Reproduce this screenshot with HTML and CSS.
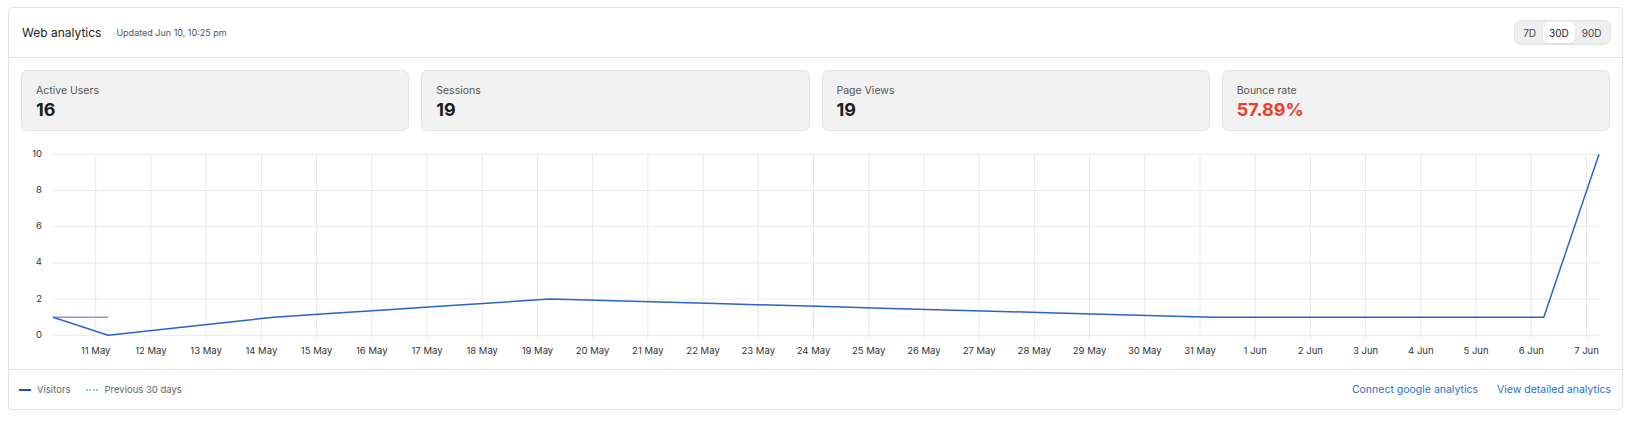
FILE: index.html
```html
<!DOCTYPE html>
<html lang="en">
<head>
  <meta charset="UTF-8" />
  <title>Web analytics</title>
  <link rel="stylesheet" href="styles.css">
</head>
<body>
  <div class="panel">
    <div class="panel-head">
      <div class="title-wrap">
        <h2 class="title">Web analytics</h2>
        <span class="updated">Updated Jun 10, 10:25 pm</span>
      </div>
      <div class="range">
        <button class="range-btn">7D</button>
        <button class="range-btn active">30D</button>
        <button class="range-btn">90D</button>
      </div>
    </div>

    <div class="stats">
      <div class="stat">
        <div class="stat-label">Active Users</div>
        <div class="stat-value">16</div>
      </div>
      <div class="stat">
        <div class="stat-label">Sessions</div>
        <div class="stat-value">19</div>
      </div>
      <div class="stat">
        <div class="stat-label">Page Views</div>
        <div class="stat-value">19</div>
      </div>
      <div class="stat">
        <div class="stat-label">Bounce rate</div>
        <div class="stat-value bad">57.89%</div>
      </div>
    </div>

    <svg id="chart" class="chart" width="1613" height="238" viewBox="0 0 1613 238"></svg>

    <div class="panel-foot">
      <div class="legend">
        <span class="legend-item"><i class="swatch solid"></i>Visitors</span>
        <span class="legend-item"><i class="swatch dotted"></i>Previous 30 days</span>
      </div>
      <div class="links">
        <a href="#">Connect google analytics</a>
        <a href="#">View detailed analytics</a>
      </div>
    </div>
  </div>

  <script>
    const svg = document.getElementById("chart");
    const NS = "http://www.w3.org/2000/svg";

    const left = 44, right = 1590;
    const zeroY = 204.3, unit = 18.1;
    const step = (right - left) / 28;
    const tickStart = 86.7;

    const days = [];
    for (let d = 11; d <= 31; d++) days.push(d + " May");
    for (let d = 1; d <= 7; d++) days.push(d + " Jun");

    // visitors, gaps already filled in
    const visitors = [1, 0, 1/3, 2/3, 1, 1.2, 1.4, 1.6, 1.8, 2];
    for (let j = 1; j <= 12; j++) visitors.push(2 - j / 12);
    for (let j = 0; j < 6; j++) visitors.push(1);
    visitors.push(10);

    const previous = [1, 1];

    function el(name, attrs, text) {
      const n = document.createElementNS(NS, name);
      for (const k in attrs) n.setAttribute(k, attrs[k]);
      if (text != null) n.textContent = text;
      svg.appendChild(n);
      return n;
    }

    const yOf = v => zeroY - v * unit;

    for (let v = 0; v <= 10; v += 2) {
      el("line", { x1: left, x2: right, y1: yOf(v), y2: yOf(v), class: "grid" });
      el("text", { x: 33, y: yOf(v), class: "y-label" }, v);
    }

    days.forEach((label, k) => {
      const x = tickStart + step * k;
      el("line", { x1: x, x2: x, y1: yOf(10), y2: zeroY + 4, class: "grid" });
      el("text", { x: x, y: 220, class: "x-label" }, label);
    });

    const pts = arr => arr.map((v, i) => (left + step * i).toFixed(1) + "," + yOf(v).toFixed(1)).join(" ");
    el("polyline", { points: pts(previous), class: "line-prev" });
    el("polyline", { points: pts(visitors), class: "line-visitors" });
  </script>
</body>
</html>
```

FILE: styles.css
```css
body {
  margin: 7px 12px 0 8px;
  font-family: Inter, "Liberation Sans", Arial, sans-serif;
  color: #1f1f1f;
  background: #fff;
}
.panel {
  border: 1px solid #e2e2e2;
  border-radius: 4px;
  background: #fff;
}
.panel-head {
  height: 49px;
  display: flex;
  align-items: center;
  justify-content: space-between;
  padding: 0 11px 0 13px;
  border-bottom: 1px solid #e2e2e2;
}
.title-wrap {
  display: flex;
  align-items: center;
  gap: 15px;
}
.title {
  margin: 0;
  font-size: 12px;
  font-weight: 400;
  color: #222;
}
.updated {
  font-size: 9px;
  color: #555;
}
.range {
  display: flex;
  padding: 1px 2px;
  background: #efefef;
  border: 1px solid #e3e3e3;
  border-radius: 7px;
}
.range-btn {
  height: 21px;
  padding: 0 6.5px;
  border: 0;
  border-radius: 5px;
  background: transparent;
  font-family: inherit;
  font-size: 10px;
  color: #444;
}
.range-btn.active {
  background: #fff;
  color: #222;
  box-shadow: 0 1px 2px rgba(0, 0, 0, 0.08);
}
.stats {
  display: grid;
  grid-template-columns: repeat(4, 1fr);
  gap: 12px;
  padding: 12px 12px 0;
}
.stat {
  height: 61px;
  box-sizing: border-box;
  padding: 13px 14px 0;
  background: #f2f2f2;
  border: 1px solid #e4e4e4;
  border-radius: 6px;
}
.stat-label {
  font-size: 10.5px;
  color: #555;
  line-height: 14px;
}
.stat-value {
  font-size: 18px;
  font-weight: 700;
  line-height: 24px;
  color: #1c1c1c;
}
.stat-value.bad {
  color: #ef3b2d;
}
.chart {
  display: block;
}
.grid {
  stroke: #e9e9e9;
  stroke-width: 1;
}
.y-label {
  font-size: 9.5px;
  fill: #333;
  text-anchor: end;
  dominant-baseline: middle;
}
.x-label {
  font-size: 9.5px;
  fill: #333;
  text-anchor: middle;
  dominant-baseline: middle;
}
.line-visitors {
  fill: none;
  stroke: #2a63cc;
  stroke-width: 1.5;
  stroke-linejoin: round;
}
.line-prev {
  fill: none;
  stroke: #8f94f2;
  stroke-width: 1.5;
}
.panel-foot {
  height: 39px;
  display: flex;
  align-items: center;
  justify-content: space-between;
  padding: 0 11px 0 10px;
  border-top: 1px solid #e2e2e2;
}
.legend {
  display: flex;
  gap: 16px;
  font-size: 9.5px;
  color: #666;
}
.legend-item {
  display: flex;
  align-items: center;
  gap: 6px;
}
.swatch {
  display: inline-block;
  width: 12px;
}
.swatch.solid {
  border-top: 2px solid #1c4fb5;
}
.swatch.dotted {
  border-top: 2px dotted #8cc6f7;
}
.links {
  display: flex;
  gap: 19px;
}
.links a {
  font-size: 10.5px;
  color: #1f6fd3;
  text-decoration: none;
}
```
